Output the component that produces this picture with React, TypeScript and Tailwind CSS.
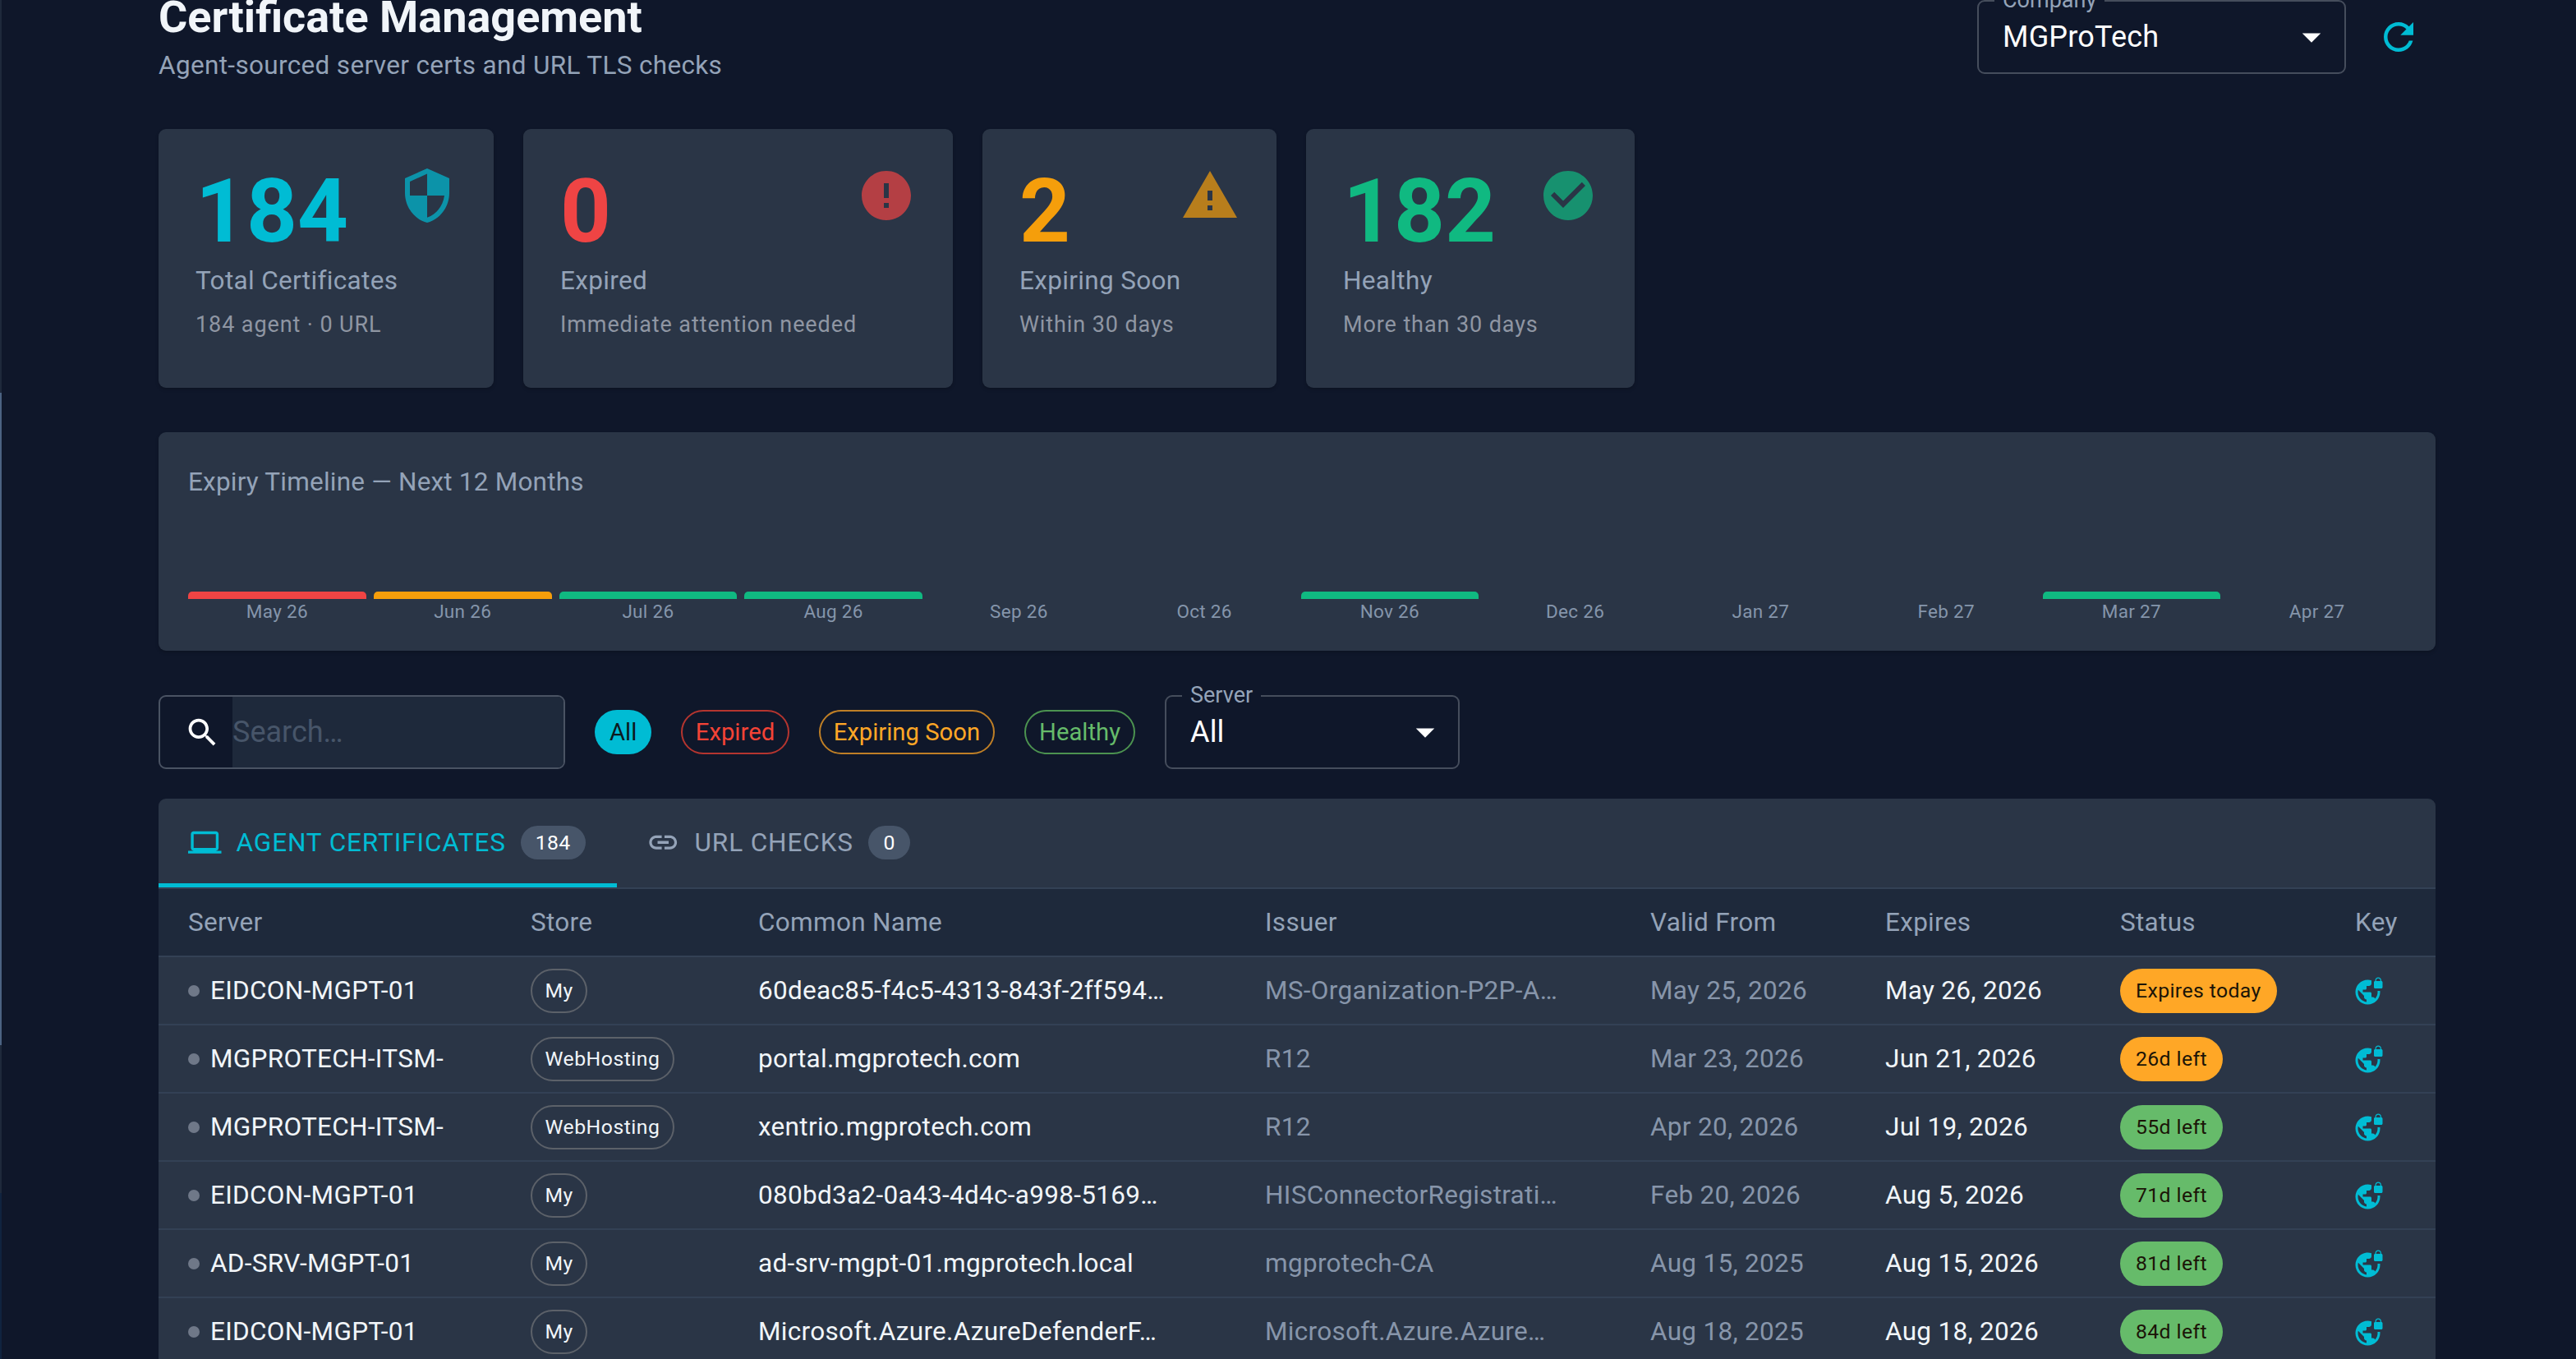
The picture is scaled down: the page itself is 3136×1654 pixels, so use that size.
const ROW = 'grid grid-cols-[417px_277px_617px_469px_286px_286px_286px_134px]';

const ICONS = {
  shield: 'M12 1L3 5v6c0 5.55 3.84 10.74 9 12 5.16-1.26 9-6.45 9-12V5l-9-4zm0 10.99h7c-.53 4.12-3.28 7.79-7 8.94V12H5V6.3l7-3.11v8.8z',
  error: 'M12 2C6.48 2 2 6.48 2 12s4.48 10 10 10 10-4.48 10-10S17.52 2 12 2zm1 15h-2v-2h2v2zm0-4h-2V7h2v6z',
  warning: 'M1 21h22L12 2 1 21zm12-3h-2v-2h2v2zm0-4h-2v-4h2v4z',
  check: 'M12 2C6.48 2 2 6.48 2 12s4.48 10 10 10 10-4.48 10-10S17.52 2 12 2zm-2 15l-5-5 1.41-1.41L10 14.17l7.59-7.59L19 8l-9 9z',
  refresh: 'M17.65 6.35C16.2 4.9 14.21 4 12 4c-4.42 0-7.99 3.58-7.99 8s3.57 8 7.99 8c3.73 0 6.84-2.55 7.73-6h-2.08c-.82 2.33-3.04 4-5.65 4-3.31 0-6-2.69-6-6s2.69-6 6-6c1.66 0 3.14.69 4.22 1.78L13 11h7V4l-2.35 2.35z',
  search: 'M15.5 14h-.79l-.28-.27C15.41 12.59 16 11.11 16 9.5 16 5.91 13.09 3 9.5 3S3 5.91 3 9.5 5.91 16 9.5 16c1.61 0 3.09-.59 4.23-1.57l.27.28v.79l5 4.99L20.49 19l-4.99-5zm-6 0C7.01 14 5 11.99 5 9.5S7.01 5 9.5 5 14 7.01 14 9.5 11.99 14 9.5 14z',
  laptop: 'M20 18c1.1 0 1.99-.9 1.99-2L22 6c0-1.1-.9-2-2-2H4c-1.1 0-2 .9-2 2v10c0 1.1.9 2 2 2H0v2h24v-2h-4zM4 6h16v10H4V6z',
  link: 'M3.9 12c0-1.71 1.39-3.1 3.1-3.1h4V7H7c-2.76 0-5 2.24-5 5s2.24 5 5 5h4v-1.9H7c-1.71 0-3.1-1.39-3.1-3.1zM8 13h8v-2H8v2zm9-6h-4v1.9h4c1.71 0 3.1 1.39 3.1 3.1s-1.39 3.1-3.1 3.1h-4V17h4c2.76 0 5-2.24 5-5s-2.24-5-5-5z',
  vpnLock: 'M22 4v-.5C22 2.12 20.88 1 19.5 1S17 2.12 17 3.5V4c-.55 0-1 .45-1 1v4c0 .55.45 1 1 1h5c.55 0 1-.45 1-1V5c0-.55-.45-1-1-1zm-.8 0h-3.4v-.5c0-.94.76-1.7 1.7-1.7s1.7.76 1.7 1.7V4zm-2.28 8c.04.33.08.66.08 1 0 2.08-.8 3.97-2.1 5.39-.26-.81-1-1.39-1.9-1.39h-1v-3c0-.55-.45-1-1-1H7v-2h2c.55 0 1-.45 1-1V8h2c1.1 0 2-.9 2-2V3.46c-.95-.3-1.95-.46-3-.46C5.48 3 1 7.48 1 13s4.48 10 10 10 10-4.48 10-10c0-.34-.02-.67-.05-1h-2.03zM10 20.93c-3.95-.49-7-3.85-7-7.93 0-.62.08-1.21.21-1.79L8 16v1c0 1.1.9 2 2 2v1.93z',
  drop: 'M7 10l5 5 5-5z',
};

function Icon({ d, className }: { d: string; className: string }) {
  return (
    <svg viewBox="0 0 24 24" fill="currentColor" className={className}>
      <path d={d} />
    </svg>
  );
}

function StatCard({ value, label, note, icon, width, color }: { value: string; label: string; note: string; icon: string; width: string; color: string }) {
  return (
    <div className={`${width} h-[315px] rounded-[9px] bg-[#2a3546] p-[45px] shadow-[0_2px_4px_rgba(0,0,0,0.2)]`}>
      <div className="flex items-start justify-between">
        <div className={`${color} text-[108px] leading-[110px] font-bold`}>{value}</div>
        <Icon d={icon} className={`${color} size-[72px] opacity-70`} />
      </div>
      <div className="mt-[7px] text-[31.5px] leading-[45px] tracking-[0.34px] text-[#94a3b8]">{label}</div>
      <div className="mt-[9px] text-[27px] leading-[45px] tracking-[0.9px] whitespace-nowrap text-[#8f96a3]">{note}</div>
    </div>
  );
}

function OutlinedSelect({ label, value, className }: { label: string; value: string; className: string }) {
  return (
    <div className={`${className} relative h-[90px] rounded-[9px] border-2 border-[#454d5c] pt-[17px] pl-[29px]`}>
      <span className="absolute -top-[20px] left-[19px] bg-[#0f172a] px-[10px] text-[27px] leading-[36px] text-[#94a3b8]">{label}</span>
      <div className="text-[36px] leading-[52px] tracking-[0.2px] text-white">{value}</div>
      <Icon d={ICONS.drop} className="absolute top-[16px] right-[13px] size-[54px] text-white" />
    </div>
  );
}

const MONTHS = [
  { name: 'May 26', bar: 'bg-[#ef4444]' },
  { name: 'Jun 26', bar: 'bg-[#f59e0b]' },
  { name: 'Jul 26', bar: 'bg-[#10b981]' },
  { name: 'Aug 26', bar: 'bg-[#10b981]' },
  { name: 'Sep 26', bar: '' },
  { name: 'Oct 26', bar: '' },
  { name: 'Nov 26', bar: 'bg-[#10b981]' },
  { name: 'Dec 26', bar: '' },
  { name: 'Jan 27', bar: '' },
  { name: 'Feb 27', bar: '' },
  { name: 'Mar 27', bar: 'bg-[#10b981]' },
  { name: 'Apr 27', bar: '' },
];

const CERTS = [
  { server: 'EIDCON-MGPT-01', store: 'My', cn: '60deac85-f4c5-4313-843f-2ff594…', issuer: 'MS-Organization-P2P-A…', from: 'May 25, 2026', to: 'May 26, 2026', status: 'Expires today', tone: 'bg-[#ffa726]' },
  { server: 'MGPROTECH-ITSM-', store: 'WebHosting', cn: 'portal.mgprotech.com', issuer: 'R12', from: 'Mar 23, 2026', to: 'Jun 21, 2026', status: '26d left', tone: 'bg-[#ffa726]' },
  { server: 'MGPROTECH-ITSM-', store: 'WebHosting', cn: 'xentrio.mgprotech.com', issuer: 'R12', from: 'Apr 20, 2026', to: 'Jul 19, 2026', status: '55d left', tone: 'bg-[#66bb6a]' },
  { server: 'EIDCON-MGPT-01', store: 'My', cn: '080bd3a2-0a43-4d4c-a998-5169…', issuer: 'HISConnectorRegistrati…', from: 'Feb 20, 2026', to: 'Aug 5, 2026', status: '71d left', tone: 'bg-[#66bb6a]' },
  { server: 'AD-SRV-MGPT-01', store: 'My', cn: 'ad-srv-mgpt-01.mgprotech.local', issuer: 'mgprotech-CA', from: 'Aug 15, 2025', to: 'Aug 15, 2026', status: '81d left', tone: 'bg-[#66bb6a]' },
  { server: 'EIDCON-MGPT-01', store: 'My', cn: 'Microsoft.Azure.AzureDefenderF…', issuer: 'Microsoft.Azure.Azure…', from: 'Aug 18, 2025', to: 'Aug 18, 2026', status: '84d left', tone: 'bg-[#66bb6a]' },
];

const COLUMNS = ['Server', 'Store', 'Common Name', 'Issuer', 'Valid From', 'Expires', 'Status', 'Key'];

export default function App() {
  return (
    <div className="relative h-screen overflow-hidden bg-[#0f172a] pr-[171px] pl-[193px] font-['Roboto',sans-serif]">
      {/* edge of the collapsed sidebar */}
      <div className="absolute top-0 left-0 h-[478px] w-[2px] bg-[#1e293b]" />
      <div className="absolute top-[478px] left-0 h-[794px] w-[2px] bg-[#4b6282]" />
      <div className="absolute top-[1272px] left-0 h-[180px] w-[2px] bg-[#1e293b]" />
      <div className="absolute top-[1452px] bottom-0 left-0 w-[2px] bg-[#10233f]" />

      {/* Header */}
      <div className="flex h-[157px] items-start justify-between">
        <div className="-mt-[15px]">
          <h1 className="text-[54px] leading-[72px] font-bold text-[#f1f5f9]">Certificate Management</h1>
          <p className="text-[31.5px] leading-[45px] tracking-[0.34px] text-[#94a3b8]">Agent-sourced server certs and URL TLS checks</p>
        </div>
        <div className="flex items-start gap-[19px]">
          <OutlinedSelect label="Company" value="MGProTech" className="w-[449px]" />
          <div className="flex size-[90px] items-center justify-center text-[#00bcd4]">
            <Icon d={ICONS.refresh} className="size-[54px]" />
          </div>
        </div>
      </div>

      {/* Stat cards */}
      <div className="flex gap-[36px]">
        <StatCard value="184" label="Total Certificates" note="184 agent · 0 URL" icon={ICONS.shield} width="w-[408px]" color="text-[#00bcd4]" />
        <StatCard value="0" label="Expired" note="Immediate attention needed" icon={ICONS.error} width="w-[523px]" color="text-[#ef4444]" />
        <StatCard value="2" label="Expiring Soon" note="Within 30 days" icon={ICONS.warning} width="w-[358px]" color="text-[#f59e0b]" />
        <StatCard value="182" label="Healthy" note="More than 30 days" icon={ICONS.check} width="w-[400px]" color="text-[#10b981]" />
      </div>

      {/* Expiry timeline */}
      <div className="mt-[54px] h-[266px] rounded-[9px] bg-[#2a3546] px-[36px] pt-[38px] shadow-[0_2px_4px_rgba(0,0,0,0.2)]">
        <div className="text-[31.5px] leading-[45px] tracking-[0.2px] text-[#94a3b8]">Expiry Timeline — Next 12 Months</div>
        <div className="mt-[111px] grid grid-cols-12 gap-[9px]">
          {MONTHS.map((month) => (
            <div key={month.name}>
              <div className={`h-[9px] rounded-t-[5px] ${month.bar}`} />
              <div className="mt-[2px] text-center text-[22.5px] leading-[27px] tracking-[0.3px] text-[#8595ab]">{month.name}</div>
            </div>
          ))}
        </div>
      </div>

      {/* Filters */}
      <div className="mt-[54px] flex h-[90px] items-center gap-[36px]">
        <div className="flex h-[90px] w-[495px] overflow-hidden rounded-[9px] border-2 border-[#4a5363]">
          <div className="flex w-[88px] shrink-0 items-center pl-[29px] text-white">
            <Icon d={ICONS.search} className="size-[45px]" />
          </div>
          <div className="flex-1 bg-[#1e293b] text-[36px] leading-[86px] text-[#475569]">Search…</div>
        </div>
        <span className="rounded-full bg-[#00bcd4] px-[18px] text-[29.25px] leading-[54px] text-[#0c1a1f]">All</span>
        <span className="rounded-full border-2 border-[#b5352f] px-[15.5px] text-[29.25px] leading-[50px] text-[#f44336]">Expired</span>
        <span className="rounded-full border-2 border-[#bf7f26] px-[16px] text-[29.25px] leading-[50px] text-[#ffa726]">Expiring Soon</span>
        <span className="rounded-full border-2 border-[#4c9350] px-[16px] text-[29.25px] leading-[50px] text-[#66bb6a]">Healthy</span>
        <OutlinedSelect label="Server" value="All" className="w-[359px]" />
      </div>

      {/* Certificates */}
      <div className="mt-[36px] rounded-t-[9px] bg-[#2a3546]">
        <div className="flex h-[110px] border-b-2 border-[#334155]">
          <div className="flex h-[108px] w-[558px] items-center gap-[18px] border-b-[5px] border-[#00bcd4] px-[36px] pt-[4px] text-[#00bcd4]">
            <Icon d={ICONS.laptop} className="size-[40.5px]" />
            <span className="text-[31.5px] tracking-[0.9px]">AGENT CERTIFICATES</span>
            <span className="rounded-full bg-[#475569] px-[18px] text-[24.75px] leading-[41px] tracking-[0.3px] text-white">184</span>
          </div>
          <div className="flex h-[108px] items-center gap-[18px] border-b-[5px] border-transparent px-[36px] pt-[4px] text-[#94a3b8]">
            <Icon d={ICONS.link} className="size-[40.5px]" />
            <span className="text-[31.5px] tracking-[0.9px]">URL CHECKS</span>
            <span className="rounded-full bg-[#475569] px-[18.5px] text-[24.75px] leading-[41px] text-white">0</span>
          </div>
        </div>

        <div className={`${ROW} h-[83px] items-center border-b-2 border-[#334155] bg-[#1e293b] text-[31.5px] tracking-[0.3px] text-[#94a3b8]`}>
          {COLUMNS.map((column) => (
            <div key={column} className="pl-[36px]">{column}</div>
          ))}
        </div>

        {CERTS.map((cert, i) => (
          <div key={i} className={`${ROW} h-[83px] items-center border-b-2 border-[#334155] text-[31.5px] tracking-[0.3px] text-[#f1f5f9]`}>
            <div className="flex items-center gap-[13px] pl-[36px]">
              <span className="size-[14px] rounded-full bg-[#6f7888]" />
              <span>{cert.server}</span>
            </div>
            <div className="pl-[36px]">
              <span className="inline-block rounded-full border-2 border-[#5c6169] px-[15.5px] text-[24.75px] leading-[50px] tracking-[0.5px]">{cert.store}</span>
            </div>
            <div className="pl-[36px]">{cert.cn}</div>
            <div className="pl-[36px] text-[#8795aa]">{cert.issuer}</div>
            <div className="pl-[36px] text-[#8795aa]">{cert.from}</div>
            <div className="pl-[36px]">{cert.to}</div>
            <div className="pl-[36px]">
              <span className={`${cert.tone} inline-block rounded-full px-[19px] text-[24.75px] leading-[54px] tracking-[0.4px] text-[#1b1407]`}>{cert.status}</span>
            </div>
            <div className="pl-[35px] text-[#00bcd4]">
              <Icon d={ICONS.vpnLock} className="size-[36px]" />
            </div>
          </div>
        ))}
      </div>
    </div>
  );
}
